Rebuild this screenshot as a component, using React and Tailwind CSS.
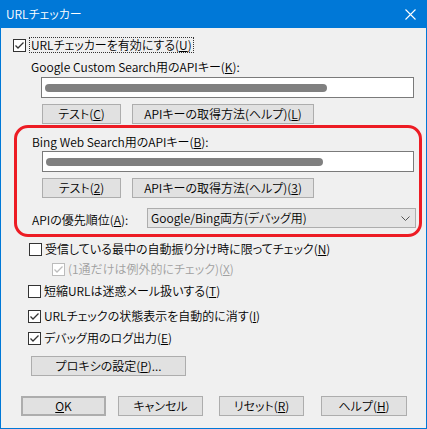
import React from 'react';

const font = { fontFamily: '"Noto Sans CJK JP", "Noto Sans", sans-serif' };

const CheckBox = ({ checked, disabled }) => (
  <svg width="13" height="13" viewBox="0 0 13 13" className="shrink-0">
    <rect x="0.5" y="0.5" width="12" height="12" fill="#ffffff" stroke={disabled ? '#bcbcbc' : '#333333'} />
    {checked && (
      <path d="M2.5 6.5 L5 9 L10.5 3.5" fill="none" stroke={disabled ? '#bcbcbc' : '#333333'} strokeWidth="1.3" />
    )}
  </svg>
);

const Btn = ({ children, className = '' }) => (
  <div className={`h-[20px] flex items-center justify-center bg-[#e1e1e1] border border-[#adadad] text-[12px] text-black ${className}`}>
    {children}
  </div>
);

const Redacted = ({ width }) => (
  <div className="ml-[3px] h-[8px] rounded-full bg-[#808080] blur-[0.6px]" style={{ width }} />
);

export default function App() {
  return (
    <div className="w-[427px] h-[429px] flex flex-col bg-[#0078d7] px-[1px] pb-[1px] font-[350] [font-feature-settings:'palt']" style={font}>
      {/* title bar */}
      <div className="h-[28px] flex items-center justify-between pl-[5px] pr-[10px] text-white text-[12px]">
        <span>URLチェッカー</span>
        <svg width="11" height="11" viewBox="0 0 11 11">
          <path d="M0.5 0.5 L10.5 10.5 M10.5 0.5 L0.5 10.5" stroke="#ffffff" strokeWidth="1.1" />
        </svg>
      </div>

      <div className="flex-1 bg-[#f0f0f0] flex flex-col text-[12px] text-black leading-none">
        {/* enable */}
        <div className="mt-[9px] h-[16px] flex items-center pl-[12px]">
          <CheckBox checked />
          <span className="ml-[3px] px-[1px] h-[16px] flex items-center border border-dotted border-[#333]">
            URLチェッカーを有効にする(<u>U</u>)
          </span>
        </div>

        <div className="mt-[6px] h-[16px] flex items-center pl-[30px]">
          Google Custom Search用のAPIキー(<u>K</u>):
        </div>

        <div className="mt-[2px] ml-[40px] w-[373px] h-[21px] bg-white border border-[#7a7a7a] flex items-center">
          <Redacted width={282} />
        </div>

        <div className="mt-[6px] flex pl-[41px] gap-[11px]">
          <Btn className="w-[79px]">テスト(<u>C</u>)</Btn>
          <Btn className="w-[182px]">APIキーの取得方法(ヘルプ)(<u>L</u>)</Btn>
        </div>

        {/* bing section */}
        <div className="mt-[1px] ml-[13px] w-[408px] h-[112px] border-[3px] border-[#ed1c24] rounded-[14px] flex flex-col">
          <div className="mt-[6px] h-[16px] flex items-center pl-[15px]">
            Bing Web Search用のAPIキー(<u>B</u>):
          </div>
          <div className="mt-[1px] ml-[25px] w-[372px] h-[21px] bg-white border border-[#7a7a7a] flex items-center">
            <Redacted width={277} />
          </div>
          <div className="mt-[6px] flex pl-[25px] gap-[11px]">
            <Btn className="w-[79px]">テスト(<u>2</u>)</Btn>
            <Btn className="w-[182px]">APIキーの取得方法(ヘルプ)(<u>3</u>)</Btn>
          </div>
          <div className="mt-[10px] flex items-center pl-[15px]">
            <span className="w-[115px] mt-[4px]">APIの優先順位(<u>A</u>):</span>
            <div className="w-[269px] h-[20px] bg-[#e5e5e5] border border-[#adadad] flex items-center justify-between pl-[3px] pr-[5px]">
              <span>Google/Bing両方(デバッグ用)</span>
              <svg width="9" height="5" viewBox="0 0 9 5">
                <path d="M0.5 0.5 L4.5 4.5 L8.5 0.5" fill="none" stroke="#555555" />
              </svg>
            </div>
          </div>
        </div>

        {/* options */}
        <div className="mt-[4px] h-[16px] flex items-center pl-[28px]">
          <CheckBox />
          <span className="ml-[3px]">受信している最中の自動振り分け時に限ってチェック(<u>N</u>)</span>
        </div>
        <div className="mt-[4px] h-[16px] flex items-center pl-[51px] text-[#a0a0a0]">
          <CheckBox checked disabled />
          <span className="ml-[3px]">(1通だけは例外的にチェック)(<u>X</u>)</span>
        </div>
        <div className="mt-[6px] h-[16px] flex items-center pl-[27px]">
          <CheckBox />
          <span className="ml-[3px]">短縮URLは迷惑メール扱いする(<u>T</u>)</span>
        </div>
        <div className="mt-[9px] h-[16px] flex items-center pl-[27px]">
          <CheckBox checked />
          <span className="ml-[3px]">URLチェックの状態表示を自動的に消す(<u>I</u>)</span>
        </div>
        <div className="mt-[6px] h-[16px] flex items-center pl-[27px]">
          <CheckBox checked />
          <span className="ml-[3px]">デバッグ用のログ出力(<u>E</u>)</span>
        </div>

        <div className="mt-[10px] pl-[30px] flex">
          <Btn className="w-[155px]">プロキシの設定(<u>P</u>)...</Btn>
        </div>

        {/* dialog buttons */}
        <div className="mt-[20px] flex pl-[20px]">
          <Btn className="w-[85px] border-2 border-[#0078d7]"><u>O</u>K</Btn>
          <Btn className="w-[85px] ml-[12px]">キャンセル</Btn>
          <Btn className="w-[85px] ml-[16px]">リセット(<u>R</u>)</Btn>
          <Btn className="w-[86px] ml-[17px]">ヘルプ(<u>H</u>)</Btn>
        </div>
      </div>
    </div>
  );
}
